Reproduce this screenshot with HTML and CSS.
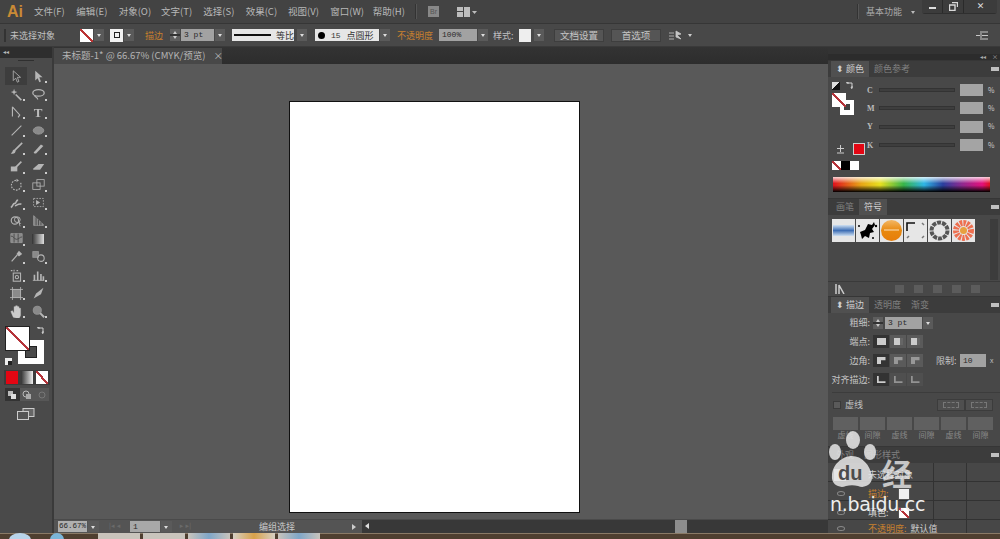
FILE: index.html
```html
<!DOCTYPE html>
<html lang="zh">
<head>
<meta charset="utf-8">
<title>Adobe Illustrator</title>
<link rel="stylesheet" href="styles.css">
</head>
<body>
<div class="app">
  <header class="menubar">
    <span class="logo">Ai</span>
    <nav class="menus">
      <span>文件(F)</span><span>编辑(E)</span><span>对象(O)</span><span>文字(T)</span><span>选择(S)</span><span>效果(C)</span><span>视图(V)</span><span>窗口(W)</span><span>帮助(H)</span>
    </nav>
    <span class="vsep"></span>
    <span class="br-icon">Br</span>
    <svg class="layout-icon" width="20" height="12" viewBox="0 0 20 12"><path d="M0 1h6v4H0zM0 6h6v5H0zM7 1h6v10H7z" fill="#bdbdbd"/><path d="M15 5h5l-2.500 3z" fill="#bdbdbd"/></svg>
    <span class="spacer"></span>
    <span class="vsep workspace-sep"></span>
    <span class="workspace">基本功能</span>
    <span class="workspace-arrow"></span>
    <div class="winbtns">
      <span class="winbtn min"><i></i></span>
      <span class="winbtn max"><svg width="9" height="9" viewBox="0 0 9 9"><path d="M3 .5h5.500V5M.5 3h5.500v5.500H.5z" fill="none" stroke="#d8d8d8" stroke-width="1.400"/></svg></span>
      <span class="winbtn close">✕</span>
    </div>
  </header>

  <section class="control">
    <span class="grip"></span>
    <span class="ctl-title">未选择对象</span>
    <span class="swatch sw-none stroke-sw"></span><span class="drop"></span>
    <span class="swatch sw-box fill-sw"><i></i></span><span class="drop"></span>
    <span class="orange ctl-stroke">描边</span>
    <span class="stepper"></span><span class="field f-pt">3 pt</span><span class="drop d-attach"></span>
    <span class="lightbox line-box"><i class="line"></i><b>等比</b></span><span class="drop d-gap"></span>
    <span class="lightbox dot-box"><i class="dot"></i><em>15</em><b>点圆形</b></span><span class="drop d-attach"></span>
    <span class="orange ctl-opacity">不透明度</span>
    <span class="field f-op">100%</span><span class="drop d-attach"></span>
    <span class="ctl-style">样式:</span>
    <span class="swatch sw-plain"></span><span class="drop d-attach"></span>
    <span class="btn btn-doc">文档设置</span>
    <span class="btn btn-pref">首选项</span>
    <svg class="arrange" width="13" height="11" viewBox="0 0 13 11"><path d="M0 3h5M0 6h5M0 9h5M7 1l5 3-4 1 4 4-5-2z" fill="#c5c5c5" stroke="#c5c5c5" stroke-width=".8"/></svg>
    <span class="small-arrow"></span>
    <span class="spacer"></span>
    <svg class="ctl-menu" width="12" height="9" viewBox="0 0 12 9"><path d="M0 4.500h4M5 0v9M6 1h6M6 4.500h6M6 8h6" stroke="#c8c8c8" fill="none"/></svg>
  </section>

  <div class="workspace-area">
    <aside class="toolbar">
      <div class="tool-head">◂◂</div>
      <div class="tool-grip"></div>
      <div class="tools">
        <span class="tool active"><svg viewBox="0 0 16 16"><path d="M4 1v12l3-3 2 5 2-1-2-5h4z"/></svg></span>
        <span class="tool"><svg viewBox="0 0 16 16"><path class="solid" d="M4 1v12l3-3 2 5 2-1-2-5h4z"/></svg></span>
        <span class="tool"><svg viewBox="0 0 16 16"><path d="M7 8l7 7" stroke-width="2"/><path class="solid" d="M5 1l1 3 3 1-3 1-1 3-1-3-3-1 3-1z"/></svg></span>
        <span class="tool"><svg viewBox="0 0 16 16"><ellipse cx="8" cy="6" rx="7" ry="4" stroke-width="1.600"/><path d="M3 9c1 3 4 2 4 5" stroke-width="1.500"/></svg></span>
        <span class="tool"><svg viewBox="0 0 16 16"><path d="M3 1v12M3 1l9 10-2 3" stroke-width="1.400"/></svg></span>
        <span class="tool"><span class="t-glyph">T</span></span>
        <span class="tool"><svg viewBox="0 0 16 16"><path d="M2 14L14 2" stroke-width="1.300"/></svg></span>
        <span class="tool"><svg viewBox="0 0 16 16"><ellipse class="grey" cx="8" cy="8" rx="6.500" ry="4.500"/></svg></span>
        <span class="tool"><svg viewBox="0 0 16 16"><path d="M15 1L6 10" stroke-width="2"/><path class="solid" d="M7 10c-2-2-4 0-4 2l-2 2c3 1 6 0 6-4z"/></svg></span>
        <span class="tool"><svg viewBox="0 0 16 16"><path d="M3 14l-1-1 9-10 3 2-9 9z" class="solid"/></svg></span>
        <span class="tool"><svg viewBox="0 0 16 16"><path class="solid" d="M1 8h8v6H1z"/><path d="M7 9l7-7" stroke-width="2"/></svg></span>
        <span class="tool"><svg viewBox="0 0 16 16"><path class="solid" d="M1 11l7-6h7l-5 7H2z"/></svg></span>
        <span class="tool"><svg viewBox="0 0 16 16"><path d="M13 6a6 6 0 1 1-4-3" stroke-width="1.400" stroke-dasharray="2 1.500"/><path class="solid" d="M8 1l3 2-3 2z"/></svg></span>
        <span class="tool"><svg viewBox="0 0 16 16"><rect x="1" y="6" width="9" height="8"/><rect x="6" y="2" width="9" height="8"/></svg></span>
        <span class="tool"><svg viewBox="0 0 16 16"><path d="M1 14c3-1 2-5 5-5 2 0 1-4 4-4M6 12c3 0 3-3 8-2" stroke-width="2"/></svg></span>
        <span class="tool"><svg viewBox="0 0 16 16"><rect x="2" y="3" width="12" height="10" stroke-dasharray="2 1.500"/><path class="solid" d="M5 5l5 3-5 3z"/></svg></span>
        <span class="tool"><svg viewBox="0 0 16 16"><circle cx="6" cy="8" r="4.500" stroke-width="1.400"/><circle cx="9" cy="7" r="3.500" stroke-width="1.200"/><path class="solid" d="M10 9l4 3-2 0 1 3-1 0z"/></svg></span>
        <span class="tool"><svg viewBox="0 0 16 16"><path class="grey" d="M2 2l12 11v1H2z"/><path d="M5 4v10M8 7v7M11 10v4" stroke="#444"/></svg></span>
        <span class="tool"><svg viewBox="0 0 16 16"><path class="grey" d="M1 2h14v11H1z"/><path d="M1 5c4 0 4 4 7 4s4-3 7-3M5 2v11M10 2v11" stroke="#444"/></svg></span>
        <span class="tool"><span class="t-grad"></span></span>
        <span class="tool"><svg viewBox="0 0 16 16"><path d="M2 14l7-8" stroke-width="1.500"/><path class="solid" d="M8 5l3-4 4 4-4 3z"/></svg></span>
        <span class="tool"><svg viewBox="0 0 16 16"><rect class="grey" x="1" y="2" width="7" height="7"/><circle cx="11" cy="10" r="4" stroke-width="1.300"/></svg></span>
        <span class="tool"><svg viewBox="0 0 16 16"><rect x="4" y="5" width="9" height="10" stroke-width="1.300"/><circle cx="8.500" cy="10" r="2" stroke-width="1.300"/><path d="M1 2h2M5 1v2M8 2h2" stroke-width="1.300"/></svg></span>
        <span class="tool"><svg viewBox="0 0 16 16"><path d="M1 14h14" /><path d="M3 14V7M7 14V3M11 14V6M14 14V9" stroke-width="2"/></svg></span>
        <span class="tool"><svg viewBox="0 0 16 16"><rect class="grey" x="3" y="3" width="10" height="10"/><path d="M3 0v16M13 0v16M0 3h16M0 13h16"/></svg></span>
        <span class="tool"><svg viewBox="0 0 16 16"><path class="solid" d="M2 14l3-6 9-7-3 8z"/></svg></span>
        <span class="tool"><svg viewBox="0 0 16 16"><path class="white" d="M4 15L1 8l2-1 2 3V2h2v5-6h2v6-5h2v6-4h2v9l-2 4z"/></svg></span>
        <span class="tool"><svg viewBox="0 0 16 16"><circle class="grey" cx="6.500" cy="6.500" r="5"/><path d="M10 10l5 5" stroke-width="2.500"/></svg></span>
      </div>
      <div class="colorbox">
        <span class="big-stroke"><i></i></span>
        <span class="big-fill"></span>
        <svg class="big-swap" width="8" height="8" viewBox="0 0 8 8"><path d="M1 1h5v5M0 1l2-1v2M6 7L5 5h2" stroke="#d0d0d0" fill="none"/></svg>
        <span class="big-default"><i></i></span>
      </div>
      <div class="mode-row">
        <span class="mode"><i class="m-red"></i></span>
        <span class="mode"><i class="m-grad"></i></span>
        <span class="mode"><i class="m-none"></i></span>
      </div>
      <div class="draw-row">
        <span class="draw on"><svg viewBox="0 0 10 10"><rect x="1" y="1" width="5" height="5" fill="#bbb"/><rect x="4" y="4" width="5" height="5" fill="#ddd"/></svg></span>
        <span class="draw"><svg viewBox="0 0 10 10"><circle cx="4" cy="4" r="3" fill="none" stroke="#bbb"/><rect x="4" y="4" width="5" height="5" fill="#aaa"/></svg></span>
        <span class="draw"><svg viewBox="0 0 10 10"><circle cx="5" cy="5" r="3" fill="none" stroke="#777"/></svg></span>
      </div>
      <div class="screen-mode"><svg width="18" height="12" viewBox="0 0 18 12"><rect x="6" y="0.500" width="11" height="8" fill="#666" stroke="#ccc"/><rect x="0.500" y="3.500" width="11" height="8" fill="#555" stroke="#ccc"/></svg></div>
    </aside>

    <main class="center">
      <div class="tabs">
        <span class="doc-tab">未标题-1* @ 66.67% (CMYK/预览)<b>×</b></span>
      </div>
      <div class="canvas"><div class="artboard"></div></div>
      <footer class="status">
        <span class="field st-zoom">66.67%</span><span class="drop st-drop"></span>
        <span class="st-nav st-first">|◂ ◂</span>
        <span class="field st-page">1</span><span class="drop st-drop"></span>
        <span class="st-nav st-last">▸ ▸|</span>
        <span class="st-text">编组选择</span>
        <span class="st-right"></span>
        <div class="hscroll"><span class="st-left"></span><span class="thumb"></span></div>
      </footer>
    </main>

    <aside class="dock">
      <div class="dock-head"><span>◂◂</span><span>×</span></div>

      <section class="panel p-color">
        <div class="p-tabs"><span class="p-tab on">⬍ 颜色</span><span class="p-tab">颜色参考</span><span class="p-menu"></span></div>
        <div class="color-body">
          <div class="color-left">
            <div class="mini-head">
              <span class="mini-default"></span>
              <svg width="8" height="8" viewBox="0 0 8 8"><path d="M1 1h5v5M0 1l2-1v2M6 7L5 5h2" stroke="#d0d0d0" fill="none"/></svg>
            </div>
            <div class="mini-box"><span class="mini-stroke"><i></i></span><span class="mini-fill"></span></div>
            <div class="warn-row">
              <svg class="warn" width="9" height="9" viewBox="0 0 9 9"><path d="M4.500 0v7M1 3.500h7M1 8h7" stroke="#ccc" fill="none"/></svg>
              <span class="red-sw"></span>
            </div>
            <div class="tri-sw"><i class="t-none"></i><i class="t-black"></i><i class="t-white"></i></div>
          </div>
          <div class="sliders">
            <div class="slider-row"><b>C</b><span class="track"></span><span class="val"></span><em>%</em></div>
            <div class="slider-row"><b>M</b><span class="track"></span><span class="val"></span><em>%</em></div>
            <div class="slider-row"><b>Y</b><span class="track"></span><span class="val"></span><em>%</em></div>
            <div class="slider-row"><b>K</b><span class="track"></span><span class="val"></span><em>%</em></div>
          </div>
        </div>
        <div class="spectrum"></div>
      </section>

      <section class="panel p-symbols">
        <div class="p-tabs"><span class="p-tab">画笔</span><span class="p-tab on">符号</span><span class="p-menu"></span></div>
        <div class="symbols-body">
          <div class="symbols">
            <span class="sym"><svg viewBox="0 0 23 23"><defs><linearGradient id="g1" x1="0" y1="0" x2="0" y2="1"><stop offset="0" stop-color="#cfe0f2"/><stop offset=".5" stop-color="#3f6fb5"/><stop offset="1" stop-color="#cfe0f2"/></linearGradient></defs><rect x="1" y="6" width="21" height="11" fill="url(#g1)"/></svg></span>
            <span class="sym"><svg viewBox="0 0 23 23"><path d="M4 13l5-2 3-6 4 1 2-3 1 3-3 4 2 3-4 1-1 5-4-2-3 3-1-4z" fill="#000"/><circle cx="20" cy="7" r="1.200"/><circle cx="3" cy="7" r="1"/><circle cx="17" cy="19" r="1"/></svg></span>
            <span class="sym"><svg viewBox="0 0 23 23"><defs><linearGradient id="g2" x1="0" y1="0" x2="0" y2="1"><stop offset="0" stop-color="#f3b765"/><stop offset=".5" stop-color="#e8890f"/><stop offset="1" stop-color="#e67d0a"/></linearGradient></defs><circle cx="11.500" cy="11.500" r="10.500" fill="url(#g2)"/><path d="M4 11h15" stroke="#fbe2c0"/></svg></span>
            <span class="sym"><svg viewBox="0 0 23 23"><path d="M3 12V4h8" fill="none" stroke="#111" stroke-width="1.600"/><path d="M18 4l2 2M3 19l2-2M18 19l2-2" stroke="#777" stroke-width="1.500"/></svg></span>
            <span class="sym"><svg viewBox="0 0 23 23"><circle cx="11.500" cy="11.500" r="8" fill="none" stroke="#555" stroke-width="4" stroke-dasharray="4 1"/></svg></span>
            <span class="sym"><svg viewBox="0 0 23 23"><circle cx="11.500" cy="11.500" r="7.500" fill="none" stroke="#ee6f4f" stroke-width="6" stroke-dasharray="2.500 1"/><circle cx="11.500" cy="11.500" r="3.500" fill="#e8a040"/></svg></span>
          </div>
          <div class="sym-scroll"></div>
        </div>
        <div class="sym-foot">
          <svg class="lib" width="11" height="10" viewBox="0 0 11 10"><path d="M1 10V0M4 10V1M4 1l5 9" stroke="#ccc" stroke-width="1.500" fill="none"/></svg>
          <span class="foot-icons"><i></i><i></i><i></i><i></i><i></i></span>
        </div>
      </section>

      <section class="panel p-stroke">
        <div class="p-tabs"><span class="p-tab on">⬍ 描边</span><span class="p-tab">透明度</span><span class="p-tab">渐变</span><span class="p-menu"></span></div>
        <div class="st-row r1"><label>粗细:</label><span class="stepper"></span><span class="field f-weight">3 pt</span><span class="drop d-attach"></span></div>
        <div class="st-row r2"><label>端点:</label><span class="sb dark"><i class="c1"></i></span><span class="sb"><i class="c2"></i></span><span class="sb"><i class="c3"></i></span></div>
        <div class="st-row r3"><label>边角:</label><span class="sb dark"><i class="j1"></i></span><span class="sb"><i class="j1 dim"></i></span><span class="sb"><i class="j1 dim"></i></span><label class="lim">限制:</label><span class="field f-limit">10</span><em class="x">x</em></div>
        <div class="st-row r4"><label>对齐描边:</label><span class="sb dark"><i class="a1"></i></span><span class="sb faint"><i class="a1 dim"></i></span><span class="sb faint"><i class="a1 dim"></i></span></div>
        <div class="dash-wrap">
          <div class="dash-head"><span class="check"></span><span class="dash-label">虚线</span><span class="spacer"></span><span class="dash-btn"><i></i></span><span class="dash-btn"><i></i></span></div>
          <div class="dash-grid">
            <span class="dash-cell"><i></i>虚线</span><span class="dash-cell"><i></i>间隙</span>
            <span class="dash-cell"><i></i>虚线</span><span class="dash-cell"><i></i>间隙</span>
            <span class="dash-cell"><i></i>虚线</span><span class="dash-cell"><i></i>间隙</span>
          </div>
        </div>
      </section>

      <section class="panel p-appear">
        <div class="p-tabs"><span class="p-tab">外观</span><span class="p-tab">图形样式</span><span class="p-menu"></span></div>
        <div class="appear-body">
          <div class="ap-row a-head"><span class="ap-sw"></span><span>未选择对象</span></div>
          <div class="ap-row"><span class="eye"></span><span class="orange">描边:</span><span class="ap-box"></span></div>
          <div class="ap-row"><span class="eye"></span><span>填色:</span><span class="ap-box red-slash"></span></div>
          <div class="ap-row ap-last"><span class="eye"></span><span class="orange">不透明度:</span><span>默认值</span></div>
        </div>
      </section>
    </aside>
  </div>

  <div class="taskbar">
    <span class="orb"></span><span class="orb small"></span>
    <span class="task"></span><span class="task"></span><span class="task t-blue"></span><span class="task t-ai"></span><span class="task t-blue"></span>
  </div>

  <div class="watermark">
    <svg class="paw" width="50" height="60" viewBox="0 0 50 60"><g fill="#e8e8e8" opacity=".85"><ellipse cx="7" cy="22" rx="6" ry="8"/><ellipse cx="25" cy="10" rx="7" ry="9"/><ellipse cx="42" cy="22" rx="6" ry="8"/><path d="M4 46c0-11 10-20 20-20s18 9 20 20c1 8-7 13-14 10-4-1-8-1-12 0-7 3-15-2-14-10z"/></g></svg>
    <span class="wm-du">du</span>
    <span class="wm-jing">经</span>
    <span class="wm-url">n.baidu.cc</span>
  </div>
</div>
</body>
</html>
```
FILE: styles.css
```css
* { box-sizing: border-box; }
html, body { margin: 0; padding: 0; }
body { width: 1000px; height: 539px; overflow: hidden; background: #4a4a4a; }
.app {
  position: relative; width: 1000px; height: 539px; overflow: hidden;
  display: flex; flex-direction: column;
  font: 9px/1 "Noto Sans CJK SC", "Liberation Sans", sans-serif; color: #c0c0c0;
  filter: blur(.35px);
}
.spacer { flex: 1; }
.orange { color: #c8802e; }
i, em { font-style: normal; display: block; }
b { font-weight: normal; }

/* menu */
.menubar { height: 23px; flex: none; display: flex; align-items: center; background: #434343; padding-left: 7px; }
.logo { width: 27px; font: bold 16px/1 "Liberation Sans", sans-serif; color: #c98a35; }
.menus { display: flex; gap: 0; width: 381px; }
.menus span { width: 42.500px; font-size: 9.500px; color: #b8b8b8; white-space: nowrap; }
.vsep { width: 1px; height: 15px; background: #333; box-shadow: 1px 0 #555; }
.br-icon { width: 11px; height: 11px; margin-left: 12px; background: #888; color: #555; font: 7px/11px "Liberation Sans", sans-serif; text-align: center; }
.layout-icon { margin-left: 18px; }
.workspace-sep { margin-right: 8px; }
.workspace { font-size: 9px; color: #aaa; white-space: nowrap; }
.workspace-arrow { margin: 3px 7px 0 9px; border: 2px solid transparent; border-top: 3px solid #bbb; }
.winbtns { display: flex; align-self: flex-start; height: 14px; margin-right: 3px; border-radius: 0 0 3px 3px; background: #2f2f2f; width: 75px; }
.winbtn { display: flex; align-items: center; justify-content: center; background: #3c3c3c; border-right: 1px solid #2a2a2a; height: 13px; }
.winbtn.min { width: 21px; } .winbtn.min i { width: 7px; height: 2px; background: #ddd; margin-top: 2px; }
.winbtn.max { width: 21px; }
.winbtn.close { width: 33px; color: #ddd; font: bold 9px/1 "DejaVu Sans", sans-serif; border: 0; }

/* control bar */
.control { height: 24px; flex: none; display: flex; align-items: center; background: #484848; border-top: 1px solid #363636; border-bottom: 1px solid #3a3a3a; padding-left: 4px; }
.grip { width: 2px; height: 13px; background: #333; }
.ctl-title { width: 45px; margin-left: 4px; font-size: 9px; white-space: nowrap; }
.swatch { width: 13px; height: 13px; display: block; background: #eee; }
.drop { width: 10px; height: 12px; background: #5a5a5a; position: relative; flex: none; }
.drop::after { content: ""; position: absolute; left: 3px; top: 5px; border: 2px solid transparent; border-top: 3px solid #ddd; }
.d-attach { margin-left: 1px; }
.stroke-sw { margin-left: 25px; background: linear-gradient(to top right, #fff 46%, #b33 46%, #b33 54%, #fff 54%); margin-right: 1px; }
.fill-sw { margin-left: 6px; margin-right: 1px; background: #f2f2f2; display: flex; align-items: center; justify-content: center; }
.fill-sw i { width: 6px; height: 6px; border: 1px solid #222; }
.ctl-stroke { margin-left: 11px; width: 18px; font-size: 9px; white-space: nowrap; }
.stepper { position: relative; width: 10px; height: 12px; margin-left: 7px; background: linear-gradient(#5e5e5e 45%, #333 45%, #333 55%, #5e5e5e 55%); flex: none; }
.stepper::before { content: ""; position: absolute; left: 3px; top: 0; border: 2px solid transparent; border-bottom: 3px solid #ccc; }
.stepper::after { content: ""; position: absolute; left: 3px; bottom: 0; border: 2px solid transparent; border-top: 3px solid #ccc; }
.field { display: block; height: 12px; background: #a2a2a2; color: #2a2a2a; font: 8px/12px "Liberation Mono", monospace; padding-left: 3px; white-space: nowrap; }
.f-pt { width: 33px; margin-left: 1px; }
.lightbox { display: flex; align-items: center; height: 12px; background: #e6e6e6; color: #333; white-space: nowrap; }
.line-box { width: 62px; margin-left: 7px; padding-left: 2px; }
.line-box .line { width: 37px; height: 1.500px; background: #111; margin-right: 5px; }
.line-box b { font-size: 9px; }
.d-gap { margin-left: 3px; }
.dot-box { width: 64px; margin-left: 8px; padding-left: 3px; }
.dot { width: 7px; height: 7px; border-radius: 50%; background: #000; }
.dot-box em { margin: 0 6px 0 6px; font: 8px "Liberation Mono", monospace; }
.dot-box b { font-size: 9px; }
.ctl-opacity { margin-left: 7px; width: 36px; font-size: 9px; white-space: nowrap; }
.f-op { width: 38px; margin-left: 6px; }
.ctl-style { margin-left: 5px; width: 21px; white-space: nowrap; }
.sw-plain { width: 12px; margin-left: 5px; margin-right: 2px; }
.btn { display: block; width: 50px; height: 13px; background: #555; border: 1px solid #3e3e3e; text-align: center; font-size: 9.500px; line-height: 11px; color: #c4c4c4; }
.btn-doc { margin-left: 10px; }
.btn-pref { margin-left: 7px; }
.arrange { margin-left: 8px; }
.small-arrow { margin: 3px 0 0 6px; border: 2px solid transparent; border-top: 3px solid #ccc; }
.ctl-menu { margin-right: 12px; }

/* main */
.workspace-area { height: 486px; flex: none; display: flex; }

.toolbar { width: 54px; flex: none; background: #4a4a4a; border-right: 2px solid #3a3a3a; display: flex; flex-direction: column; }
.tool-head { height: 11px; background: #2e2e2e; color: #bbb; font-size: 6px; line-height: 10px; padding-left: 3px; }
.tool-grip { height: 9px; position: relative; }
.tool-grip::after { content: ""; position: absolute; left: 18px; right: 18px; top: 2px; height: 1px; background: #2f2f2f; }
.tools { display: grid; grid-template-columns: 22px 22px; grid-auto-rows: 18.100px; padding-left: 5px; }
.tool { position: relative; display: flex; align-items: center; justify-content: center; }
.tool svg { width: 13px; height: 13px; fill: none; stroke: #b5b5b5; stroke-width: 1; }
.tool .solid { fill: #b5b5b5; stroke: none; }
.tool .grey { fill: #8a8a8a; stroke: #999; }
.tool .white { fill: #ccc; stroke: #ccc; stroke-width: .5; }
.tool.active { background: #3d3d3d; }
.tool:nth-child(n+1)::after { content: ""; position: absolute; right: 2px; bottom: 2px; width: 2px; height: 2px; background: #ccc; }
.tool:nth-child(1)::after, .tool:nth-child(6n+20)::after { display: none; }
.t-glyph { font: bold 13px/1 "Liberation Serif", serif; color: #bbb; }
.t-grad { width: 12px; height: 10px; background: linear-gradient(90deg, #333, #ddd); }

.colorbox { position: relative; height: 42px; margin-top: 6px; }
.big-stroke { position: absolute; left: 18px; top: 14px; width: 26px; height: 24px; background: #fff; display: flex; align-items: center; justify-content: center; }
.big-stroke i { width: 12px; height: 12px; background: #4a4a4a; border: 1px solid #222; }
.big-fill { position: absolute; left: 5px; top: 0; width: 25px; height: 25px; border: 1px solid #222; background: linear-gradient(to top right, #fff 47%, #b5343a 47%, #b5343a 53%, #fff 53%); }
.big-swap { position: absolute; left: 37px; top: 1px; }
.big-default { position: absolute; left: 5px; top: 32px; width: 7px; height: 7px; background: #eee; }
.big-default i { width: 4px; height: 4px; margin: 3px; background: #222; }
.mode-row { display: flex; margin: 2px 0 0 4px; width: 46px; height: 15px; background: #3c3c3c; padding: 1px 2px; gap: 3px; }
.mode { width: 13px; height: 13px; }
.mode i { width: 100%; height: 100%; }
.m-red { background: #e30613; }
.m-grad { background: linear-gradient(90deg, #333, #eee); }
.m-none { background: linear-gradient(to top right, #fff 44%, #b5343a 44%, #b5343a 56%, #fff 56%); }
.draw-row { display: flex; margin: 3px 0 0 5px; width: 44px; height: 13px; }
.draw { flex: 1; display: flex; align-items: center; justify-content: center; background: #575757; }
.draw.on { background: #333; }
.draw svg { width: 10px; height: 10px; }
.screen-mode { margin: 7px 0 0 17px; }

.center { flex: 1; min-width: 0; display: flex; flex-direction: column; }
.tabs { height: 17px; flex: none; background: linear-gradient(#333, #2d2d2d); padding-top: 1px; }
.doc-tab { display: block; width: 168px; height: 16px; background: #484848; padding-left: 8px; font-size: 9.500px; line-height: 15px; color: #b5b5b5; white-space: nowrap; }
.doc-tab b { margin-left: 8px; }
.canvas { flex: 1; min-height: 0; background: #595959; padding: 37px 0 0 235px; }
.artboard { width: 291px; height: 412px; background: #fff; border: 1px solid #111; }
.status { height: 14px; flex: none; display: flex; align-items: center; background: #545454; border-top: 1px solid #4a4a4a; padding-left: 4px; }
.st-zoom { width: 29px; height: 11px; line-height: 11px; padding-left: 1px; font-size: 7.500px; background: #b0b0b0; }
.st-drop { width: 11px; height: 11px; margin-left: 1px; }
.st-first { width: 31px; }
.st-nav { color: #6a6a6a; font: 7px/1 "DejaVu Sans", sans-serif; text-align: center; white-space: nowrap; }
.st-page { width: 30px; height: 11px; line-height: 11px; background: #a8a8a8; }
.st-last { width: 27px; }
.st-text { margin-left: 60px; width: 93px; font-size: 9px; color: #c8c8c8; white-space: nowrap; }
.st-right { border: 3px solid transparent; border-left: 4px solid #ccc; }
.hscroll { position: relative; margin-left: 3px; flex: 1; align-self: stretch; background: #383838; }
.st-left { position: absolute; left: 3px; top: 3px; border: 3px solid transparent; border-right: 4px solid #ddd; border-left: 0; }
.thumb { position: absolute; left: 313px; top: 0; width: 12px; height: 13px; background: #8d8d8d; }

/* dock */
.dock { position: relative; width: 172px; flex: none; background: #484848; display: flex; flex-direction: column; }
.dock-head { height: 13px; flex: none; background: linear-gradient(#333 52%, #2c2c2c 52%); display: flex; justify-content: flex-end; align-items: flex-end; gap: 6px; padding-right: 2px; color: #aaa; font-size: 6px; }
.panel { flex: none; border-top: 1px solid #363636; }
.p-tabs { height: 16px; display: flex; align-items: stretch; background: #3c3c3c; padding-left: 3px; position: relative; }
.p-tab { padding: 0 5px; font-size: 9px; line-height: 16px; color: #808080; white-space: nowrap; }
.p-tab.on { background: #505050; color: #cfcfcf; }
.p-menu { position: absolute; right: 1px; top: 6px; width: 8px; height: 4px; background: #c0c0c0; }

.p-color { height: 138px; }
.color-body { display: flex; height: 100px; }
.color-left { width: 36px; padding: 5px 0 0 4px; }
.mini-head { display: flex; gap: 6px; height: 9px; }
.mini-default { width: 8px; height: 8px; background: linear-gradient(135deg, #ddd 50%, #111 50%); }
.mini-box { position: relative; height: 24px; margin-top: 2px; }
.mini-fill { position: absolute; left: 0; top: 0; width: 14px; height: 14px; background: linear-gradient(to top right, #fff 44%, #b5343a 44%, #b5343a 56%, #fff 56%); }
.mini-stroke { position: absolute; left: 8px; top: 7px; width: 14px; height: 15px; background: #fff; padding: 4px; }
.mini-stroke i { width: 6px; height: 6px; background: #444; }
.warn-row { display: flex; align-items: center; margin-top: 27px; }
.warn { margin: 0 9px 0 4px; }
.red-sw { width: 10px; height: 10px; background: #e30613; outline: 1px solid #ccc; }
.tri-sw { display: flex; margin-top: 7px; }
.tri-sw i { width: 9px; height: 9px; }
.t-none { background: linear-gradient(to top right, #fff 42%, #b5343a 42%, #b5343a 58%, #fff 58%); }
.t-black { background: #000; } .t-white { background: #fff; }
.sliders { flex: 1; padding-top: 4px; }
.slider-row { display: flex; align-items: center; height: 18.300px; }
.slider-row b { width: 15px; padding-left: 3px; font: bold 8px "Liberation Serif", serif; color: #bbb; }
.track { width: 76px; height: 4px; background: #3e3e3e; border: 1px solid #333; }
.val { width: 23px; height: 12px; margin-left: 5px; background: #a4a4a4; }
.slider-row em { margin-left: 5px; font-size: 7px; color: #ccc; }
.spectrum { width: 157px; height: 15px; margin: 0 0 0 5px; background: linear-gradient(#ffffffd0, #fff0 42%, #0000 55%, #000 100%), linear-gradient(90deg, #e0111e, #e8a617 18%, #e8e020 30%, #38b54a 45%, #2fb6e6 58%, #2a3f9e 70%, #8e2a90 82%, #e4107c 95%, #e0111e); }

.p-symbols { height: 98px; }
.symbols-body { display: flex; height: 66px; padding: 4px 0 0 4px; }
.symbols { display: flex; width: 158px; height: 23px; gap: 1px; flex: none; }
.sym { width: 23px; height: 23px; background: #e6e6e6; }
.sym svg { display: block; width: 23px; height: 23px; }
.sym-scroll { width: 8px; height: 61px; background: #3c3c3c; }
.sym-foot { display: flex; align-items: center; height: 15px; border-top: 1px solid #3a3a3a; padding-left: 7px; }
.foot-icons { display: flex; gap: 10px; margin-left: 49px; }
.foot-icons i { width: 9px; height: 8px; background: #5c5c5c; }

.p-stroke { height: 150px; }
.st-row { display: flex; align-items: center; height: 13px; }
.st-row label { width: 42px; text-align: right; font-size: 9px; color: #c4c4c4; white-space: nowrap; }
.st-row .stepper { margin-left: 3px; }
.r1 { margin-top: 3px; }
.r2 { margin-top: 6px; } .r3 { margin-top: 6px; } .r4 { margin-top: 6px; }
.f-weight { width: 37px; margin-left: 2px; }
.sb { width: 16px; height: 13px; margin-right: 1px; background: #5a5a5a; display: flex; align-items: center; justify-content: center; }
.st-row label + .sb { margin-left: 3px; }
.sb.dark { background: #333; }
.sb.faint { background: #4f4f4f; }
.sb i { width: 9px; height: 7px; background: #ccc; }
.c2, .c3 { box-shadow: inset 4px 0 #ccc, inset -3px 0 #666; }
.j1 { clip-path: polygon(0 0, 100% 0, 100% 45%, 50% 45%, 50% 100%, 0 100%); }
.a1 { clip-path: polygon(0 0, 25% 0, 25% 75%, 100% 75%, 100% 100%, 0 100%); }
.dim { opacity: .55; }
.st-row .lim { width: 23px; margin-left: 12px; text-align: left; white-space: nowrap; }
.f-limit { width: 26px; margin-left: 1px; height: 13px; line-height: 13px; }
.x { margin-left: 4px; font-size: 7px; }
.dash-wrap { margin: 6px 0 0 4px; border-top: 1px solid #3c3c3c; }
.dash-head { display: flex; align-items: center; height: 13px; margin-top: 5px; padding-left: 1px; padding-right: 7px; }
.check { width: 8px; height: 8px; background: #5a5a5a; border: 1px solid #3a3a3a; }
.dash-label { margin-left: 4px; font-size: 9px; color: #c0c0c0; }
.dash-btn { width: 28px; height: 12px; background: #4f4f4f; border: 1px solid #3c3c3c; padding: 2px 5px; }
.dash-btn i { height: 100%; border: 1px dashed #777; }
.dash-grid { display: grid; grid-template-columns: repeat(6, 27px); margin-top: 6px; padding-left: 1px; }
.dash-cell { display: block; text-align: center; font-size: 8px; color: #888; white-space: nowrap; padding-right: 2px; }
.dash-cell i { height: 13px; background: #606060; margin-bottom: 1px; }

.p-appear { flex: 1; min-height: 0; overflow: hidden; }
.appear-body {
  position: relative; height: 71px; padding-top: 2px;
  background:
    linear-gradient(#323232, #323232) 105px 0 / 1px 100% no-repeat,
    linear-gradient(#323232, #323232) 138px 0 / 1px 100% no-repeat,
    repeating-linear-gradient(#474747 0 18px, #323232 18px 19px);
}
.ap-row { position: relative; display: flex; align-items: center; height: 19px; gap: 4px; color: #cfcfcf; padding-left: 40px; white-space: nowrap; }
.ap-last { height: 12px; }
.a-head { padding-left: 6px; gap: 22px; }
.ap-sw { width: 12px; height: 12px; background: #ddd; }
.ap-box { position: absolute; left: 70px; width: 12px; height: 12px; background: #f0f0f0; border: 1px solid #555; }
.red-slash { background: linear-gradient(to top right, #fff 44%, #b5343a 44%, #b5343a 56%, #fff 56%); }
.eye { position: absolute; left: 9px; width: 8px; height: 5px; border-radius: 50%; border: 1px solid #888; }

/* taskbar */
.taskbar { flex: 1; min-height: 0; display: flex; background: linear-gradient(#8a7a66 0 1px, #4f3f30 1px); overflow: hidden; }
.orb { width: 22px; height: 14px; margin-left: 9px; border-radius: 50%; background: #b8d4ea; }
.orb.small { width: 14px; margin: 0 34px 0 19px; background: #7bb6d9; }
.task { width: 42px; margin-right: 3px; background: #c9c4bc; }
.t-blue { background: linear-gradient(90deg, #c9c4bc, #7fa6c8 50%, #c9c4bc); }
.t-ai { background: linear-gradient(90deg, #d6d0c4, #d9a24a 50%, #d6d0c4); }

/* watermark */
.watermark { position: absolute; left: 828px; top: 428px; width: 97px; height: 90px; overflow: hidden; color: #f1f1f1; pointer-events: none; }
.paw { position: absolute; left: 0; top: 2px; }
.wm-du { position: absolute; left: 10px; top: 35px; font: bold 20px/1 "Liberation Sans", sans-serif; color: #4c4c4c; }
.wm-jing { position: absolute; left: 54px; top: 29px; font: bold 30px/1 "Noto Sans CJK SC", sans-serif; color: #e8e8e8; opacity: .8; }
.wm-url { position: absolute; left: 2px; top: 67px; font: 19px/1 "DejaVu Sans", sans-serif; letter-spacing: -.3px; color: #eee; }
```
